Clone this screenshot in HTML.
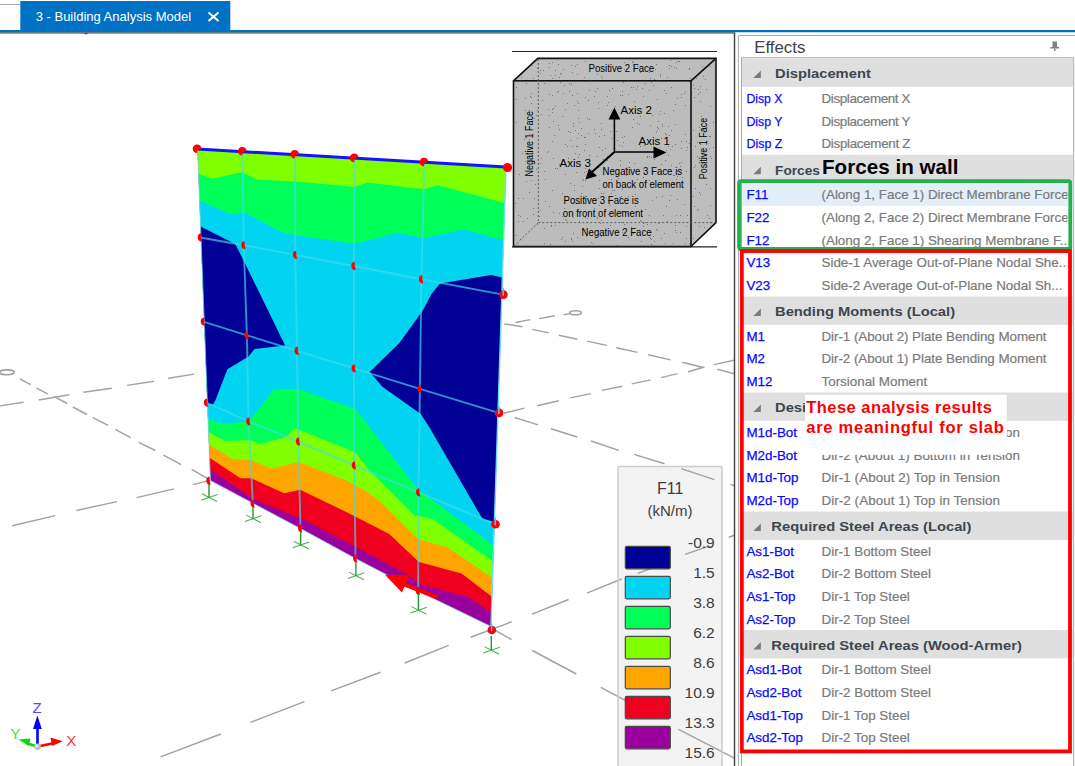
<!DOCTYPE html>
<html><head><meta charset="utf-8"><style>html,body{margin:0;padding:0;background:#fff;overflow:hidden}svg{display:block}</style></head>
<body><svg width="1075" height="766" viewBox="0 0 1075 766">
<g clip-path="url(#vp)">
<path d="M20,378.8L30.6,384.7M36.4,388.2L48.2,394.1M54.1,396.4L67,403.5M72.9,407L87,414.5M92.8,417.6L108.1,425.4M115.3,429.4L130.6,437.6M138.8,442.3L155.3,450.5M163.5,455.2L181.1,464.7M191.7,469.4L208.2,478.8M492,628.5L511.6,639.7M532.3,650.5L576.3,674M600.8,687.3L645,711M678.6,729.3L735,758.5M0,405.9L23.5,402.3M38.8,400L69.3,394.8M83.4,392.2L111.8,388.2M127,385.4L154.1,381.2M168.2,378.3L194.1,374.1M515.6,322.5L530.3,319.6M539.1,318.6L554.8,315.7M563.6,314.7L570,313.6M12.2,525.7L55.2,515.6M76.4,510.5L116.9,501.6M136.5,497.6L174.1,488.9M192.9,484.6L207,481.1M503.9,413.2L524.4,408.1M537.2,405.7L558.7,400.8M570.4,397.9L591,393.6M601.8,390.4L622.3,386.2M631.7,383.9L650.5,379.9M661.1,377.6L677.5,373.6M688.1,371.7L704.5,367M713.9,364.6L735,360M160.5,756.9L220.9,734M250.5,722.4L304.4,701.6M331.2,690.9L380.5,672.3M404.7,663L448.7,645.3M470.7,637.3L511.6,621.8M532,614.1L568.6,599.5M586.9,593.1L621.6,579M637.7,573.4L660,565M685.1,554.4L709.7,545.9M728.6,537.4L735,535M503.9,323.9L522.5,326.8M532.3,329.4L548.9,332.9M558.7,335.2L577.3,339.2M587.1,341.1L606.7,345.4M616.4,347.7L637.6,352.4M648.2,354.8L670.5,359.9M682.2,362.3L703.4,367.5M717.5,369.3L735,373.9M514.6,417.5L538.1,424.9M550.9,428.8L577.3,437M591,441L618.8,450.4M634.1,454.4L664.6,463.8M681.3,468.6L714.4,479.6M730.5,484.4L735,485.8" stroke="#a2a2a2" stroke-width="1.45" fill="none"/>
<ellipse cx="7" cy="372.3" rx="7.2" ry="2.4" fill="none" stroke="#a2a2a2" stroke-width="1.6"/>
<ellipse cx="575.5" cy="312.8" rx="5.8" ry="2" fill="none" stroke="#a2a2a2" stroke-width="1.6"/>
<polygon points="197.5,149.0 506.0,167.0 491.0,626.5 418.5,591.3 355.5,558.5 300.5,528.5 252.5,503.0 210.4,480.5" fill="#99009c"/>
<polygon points="197.5,149.0 506.0,167.0 491.5,612.5 468.7,596.9 419.0,584.0 408.0,574.7 356.0,547.0 300.3,518.0 297.0,517.5 252.7,498.5 250.0,496.8 210.0,469.5" fill="#ee001e"/>
<polygon points="197.5,149.0 506.0,167.0 492.0,596.8 461.5,573.6 418.9,562.0 389.2,533.9 356.1,517.0 340.0,509.0 300.2,489.8 284.0,493.3 251.4,478.3 240.4,478.3 209.5,457.7" fill="#ffa500"/>
<polygon points="197.5,149.0 506.0,167.0 492.6,578.0 447.5,547.2 418.9,539.5 379.0,500.0 373.9,496.9 367.1,491.8 345.0,480.0 298.7,462.1 271.6,468.7 250.5,460.0 233.4,459.4 209.0,444.5" fill="#80ff00"/>
<polygon points="198.5,173.5 212.0,178.8 242.5,172.3 256.8,179.5 295.0,181.4 345.0,185.9 354.6,187.1 367.4,182.4 424.0,189.3 437.8,185.3 504.8,203.0 493.1,561.4 433.3,519.6 418.9,515.7 414.7,515.5 373.9,474.8 368.8,469.7 355.2,452.2 298.3,429.5 293.6,428.8 288.5,435.0 284.5,437.4 260.8,443.8 249.8,440.2 225.1,441.1 208.5,432.0" fill="#00ff58"/>
<polygon points="199.5,200.4 230.0,214.0 244.0,212.2 285.0,233.8 296.0,235.0 354.4,244.0 396.7,232.8 424.0,237.8 464.3,229.6 503.6,240.5 493.6,545.7 417.0,488.3 355.1,408.6 329.2,400.0 298.5,389.2 294.6,388.9 274.1,388.8 273.2,390.0 266.2,400.0 257.1,411.0 248.0,421.6 222.4,423.7 208.0,419.0" fill="#00d4f0"/>
<polygon points="200.5,226.6 235.3,244.0 244.8,263.0 285.1,345.5 254.6,348.9 248.6,356.5 227.4,369.3 215.5,400.0 213.0,404.4 207.4,404.0" fill="#000096"/>
<polygon points="502.4,277.6 491.0,275.1 440.1,283.6 431.6,293.8 423.1,309.9 399.4,343.0 369.7,372.0 382.4,386.7 420.8,414.1 429.9,428.2 482.5,519.0 494.4,521.7" fill="#000096"/>
<polyline points="506.0,167.0 491.0,626.5" fill="none" stroke="#6fdcff" stroke-width="1.4"/>
<polyline points="210.4,480.5 252.5,503.0 300.5,528.5 355.5,558.5 418.5,591.3 491.0,626.5" fill="none" stroke="#7fd0ff" stroke-width="1" opacity="0.8"/>
<line x1="197.5" y1="149" x2="210.4" y2="480.5" stroke="#7fd8ff" stroke-width="1" opacity="0.8"/>
<polyline points="200.2,237.5 243.7,245.2 295.3,254.9 353.8,266.0 421.4,279.3 502.9,294.6" fill="none" stroke="#44daee" stroke-width="1.9" opacity="0.66"/>
<polyline points="203.2,321.7 246.9,335.3 297.0,350.8 354.0,368.4 419.9,388.9 498.6,412.9" fill="none" stroke="#44daee" stroke-width="1.9" opacity="0.66"/>
<polyline points="206.3,402.7 248.6,421.4 298.3,441.5 354.2,465.4 418.5,492.4 495.0,524.2" fill="none" stroke="#44daee" stroke-width="1.9" opacity="0.66"/>
<polyline points="242.7,151.6 243.7,245.2 246.9,335.3 248.6,421.4 252.9,503.7" fill="none" stroke="#44daee" stroke-width="1.9" opacity="0.66"/>
<polyline points="295.1,154.6 295.3,254.9 297.0,350.8 298.3,441.5 300.5,528.3" fill="none" stroke="#44daee" stroke-width="1.9" opacity="0.66"/>
<polyline points="354.6,158.2 353.8,266.0 354.0,368.4 354.2,465.4 355.5,558.4" fill="none" stroke="#44daee" stroke-width="1.9" opacity="0.66"/>
<polyline points="424.4,162.3 421.4,279.3 419.9,388.9 418.5,492.4 418.2,591.0" fill="none" stroke="#44daee" stroke-width="1.9" opacity="0.66"/>
<line x1="197.5" y1="149" x2="506" y2="167" stroke="#1414ff" stroke-width="3"/>
<path d="M197.0,144.39999999999998 A4.3,4.3 0 0 0 197.0,153.0 L197.6,149.7 L201.3,148.39999999999998 A4.3,4.3 0 0 0 197.0,144.39999999999998 Z" fill="#ff0000"/>
<path d="M242.2,146.99999999999997 A4.3,4.3 0 0 0 242.2,155.6 L242.79999999999998,152.29999999999998 L246.5,150.99999999999997 A4.3,4.3 0 0 0 242.2,146.99999999999997 Z" fill="#ff0000"/>
<path d="M294.6,149.99999999999997 A4.3,4.3 0 0 0 294.6,158.6 L295.20000000000005,155.29999999999998 L298.90000000000003,153.99999999999997 A4.3,4.3 0 0 0 294.6,149.99999999999997 Z" fill="#ff0000"/>
<path d="M354.1,153.59999999999997 A4.3,4.3 0 0 0 354.1,162.2 L354.70000000000005,158.89999999999998 L358.40000000000003,157.59999999999997 A4.3,4.3 0 0 0 354.1,153.59999999999997 Z" fill="#ff0000"/>
<path d="M423.9,157.7 A4.3,4.3 0 0 0 423.9,166.3 L424.5,163.0 L428.2,161.7 A4.3,4.3 0 0 0 423.9,157.7 Z" fill="#ff0000"/>
<circle cx="507.5" cy="167.5" r="4.6" fill="#ff0000"/>
<path d="M201.0,233.3 A4.2,4.2 0 0 0 202.0,241.6 C201.39999999999998,239.5 201.1,236.5 201.0,233.3 Z" fill="#ff0000"/>
<path d="M244.5,241.0 A4.2,4.2 0 0 0 245.5,249.29999999999998 C244.89999999999998,247.2 244.6,244.2 244.5,241.0 Z" fill="#ff0000"/>
<path d="M296.1,250.70000000000002 A4.2,4.2 0 0 0 297.1,259.0 C296.5,256.9 296.2,253.9 296.1,250.70000000000002 Z" fill="#ff0000"/>
<path d="M354.6,261.8 A4.2,4.2 0 0 0 355.6,270.1 C355.0,268 354.7,265 354.6,261.8 Z" fill="#ff0000"/>
<path d="M422.2,275.1 A4.2,4.2 0 0 0 423.2,283.40000000000003 C422.59999999999997,281.3 422.29999999999995,278.3 422.2,275.1 Z" fill="#ff0000"/>
<circle cx="503.4" cy="294.6" r="4.3" fill="#ff0000"/>
<line x1="503.2" y1="288.6" x2="503.2" y2="295.1" stroke="#3cc8ff" stroke-width="1.6" stroke-linecap="round"/>
<path d="M204.0,317.5 A4.2,4.2 0 0 0 205.0,325.8 C204.39999999999998,323.7 204.1,320.7 204.0,317.5 Z" fill="#ff0000"/>
<path d="M247.70000000000002,331.1 A4.2,4.2 0 0 0 248.70000000000002,339.40000000000003 C248.1,337.3 247.8,334.3 247.70000000000002,331.1 Z" fill="#ff0000"/>
<path d="M297.8,346.6 A4.2,4.2 0 0 0 298.8,354.90000000000003 C298.2,352.8 297.9,349.8 297.8,346.6 Z" fill="#ff0000"/>
<path d="M354.8,364.2 A4.2,4.2 0 0 0 355.8,372.5 C355.2,370.4 354.9,367.4 354.8,364.2 Z" fill="#ff0000"/>
<path d="M420.7,384.7 A4.2,4.2 0 0 0 421.7,393.0 C421.09999999999997,390.9 420.79999999999995,387.9 420.7,384.7 Z" fill="#ff0000"/>
<circle cx="499.1" cy="412.9" r="4.3" fill="#ff0000"/>
<line x1="498.90000000000003" y1="406.9" x2="498.90000000000003" y2="413.4" stroke="#3cc8ff" stroke-width="1.6" stroke-linecap="round"/>
<path d="M207.10000000000002,398.5 A4.2,4.2 0 0 0 208.10000000000002,406.8 C207.5,404.7 207.20000000000002,401.7 207.10000000000002,398.5 Z" fill="#ff0000"/>
<path d="M249.4,417.2 A4.2,4.2 0 0 0 250.4,425.5 C249.79999999999998,423.4 249.5,420.4 249.4,417.2 Z" fill="#ff0000"/>
<path d="M299.1,437.3 A4.2,4.2 0 0 0 300.1,445.6 C299.5,443.5 299.2,440.5 299.1,437.3 Z" fill="#ff0000"/>
<path d="M355.0,461.2 A4.2,4.2 0 0 0 356.0,469.5 C355.4,467.4 355.09999999999997,464.4 355.0,461.2 Z" fill="#ff0000"/>
<path d="M419.3,488.2 A4.2,4.2 0 0 0 420.3,496.5 C419.7,494.4 419.4,491.4 419.3,488.2 Z" fill="#ff0000"/>
<circle cx="495.5" cy="524.2" r="4.3" fill="#ff0000"/>
<line x1="495.3" y1="518.2" x2="495.3" y2="524.7" stroke="#3cc8ff" stroke-width="1.6" stroke-linecap="round"/>
<path d="M209.60000000000002,476.6 A4.2,4.2 0 0 0 210.60000000000002,484.90000000000003 C210.0,482.8 209.70000000000002,479.8 209.60000000000002,476.6 Z" fill="#ff0000"/>
<path d="M253.70000000000002,499.5 A4.2,4.2 0 0 0 254.70000000000002,507.8 C254.1,505.7 253.8,502.7 253.70000000000002,499.5 Z" fill="#ff0000"/>
<path d="M301.3,524.0999999999999 A4.2,4.2 0 0 0 302.3,532.4 C301.7,530.3 301.4,527.3 301.3,524.0999999999999 Z" fill="#ff0000"/>
<path d="M356.3,554.1999999999999 A4.2,4.2 0 0 0 357.3,562.5 C356.7,560.4 356.4,557.4 356.3,554.1999999999999 Z" fill="#ff0000"/>
<path d="M419.0,586.8 A4.2,4.2 0 0 0 420.0,595.1 C419.4,593 419.09999999999997,590 419.0,586.8 Z" fill="#ff0000"/>
<circle cx="491.8" cy="630" r="4.3" fill="#ff0000"/>
<line x1="491.6" y1="624" x2="491.6" y2="630.5" stroke="#3cc8ff" stroke-width="1.6" stroke-linecap="round"/>
<g stroke="#229a30" fill="none"><line x1="209" y1="484" x2="209" y2="497" stroke-width="1.4"/><line x1="201" y1="500.3" x2="217.5" y2="494.4" stroke-width="1.05" opacity="0.8"/><line x1="202" y1="493.8" x2="217" y2="501.5" stroke-width="1.05" opacity="0.8"/></g>
<g stroke="#229a30" fill="none"><line x1="253" y1="506.7" x2="253" y2="518.3" stroke-width="1.4"/><line x1="245" y1="521.5999999999999" x2="261.5" y2="515.6999999999999" stroke-width="1.05" opacity="0.8"/><line x1="246" y1="515.0999999999999" x2="261" y2="522.8" stroke-width="1.05" opacity="0.8"/></g>
<g stroke="#229a30" fill="none"><line x1="300.7" y1="531.3" x2="300.7" y2="544.5" stroke-width="1.4"/><line x1="292.7" y1="547.8" x2="309.2" y2="541.9" stroke-width="1.05" opacity="0.8"/><line x1="293.7" y1="541.3" x2="308.7" y2="549.0" stroke-width="1.05" opacity="0.8"/></g>
<g stroke="#229a30" fill="none"><line x1="355.9" y1="561.5" x2="355.9" y2="575.3" stroke-width="1.4"/><line x1="347.9" y1="578.5999999999999" x2="364.4" y2="572.6999999999999" stroke-width="1.05" opacity="0.8"/><line x1="348.9" y1="572.0999999999999" x2="363.9" y2="579.8" stroke-width="1.05" opacity="0.8"/></g>
<g stroke="#229a30" fill="none"><line x1="418.4" y1="594" x2="418.4" y2="609.8" stroke-width="1.4"/><line x1="410.4" y1="613.0999999999999" x2="426.9" y2="607.1999999999999" stroke-width="1.05" opacity="0.8"/><line x1="411.4" y1="606.5999999999999" x2="426.4" y2="614.3" stroke-width="1.05" opacity="0.8"/></g>
<g stroke="#229a30" fill="none"><line x1="491.3" y1="636" x2="491.3" y2="649.8" stroke-width="1.4"/><line x1="483.3" y1="653.0999999999999" x2="499.8" y2="647.1999999999999" stroke-width="1.05" opacity="0.8"/><line x1="484.3" y1="646.5999999999999" x2="499.3" y2="654.3" stroke-width="1.05" opacity="0.8"/></g>
<polygon points="385,574.7 409.6,574.7 401.9,592.5" fill="#ff0000"/>
<line x1="401" y1="583" x2="437.6" y2="597.6" stroke="#ff0000" stroke-width="4.2"/>
<g font-family="Liberation Sans" fill="#000">
<line x1="512" y1="51.5" x2="717" y2="51.5" stroke="#222" stroke-width="1"/>
<polygon points="513.5,80.8 537.8,58.4 716,58.4 716,222.6 691,246.5 513.5,246.5" fill="#bdbdbd"/>
<rect x="513.5" y="80.8" width="177.5" height="165.7" fill="#bcbcbc" stroke="#111" stroke-width="1.6"/>
<polyline points="513.5,80.8 537.8,58.4 716,58.4 716,222.6 691,246.5" fill="none" stroke="#111" stroke-width="1.6"/>
<line x1="691" y1="80.8" x2="716" y2="58.4" stroke="#111" stroke-width="1.6"/>
<g stroke="#555" stroke-width="0.9" stroke-dasharray="2,2"><line x1="538.3" y1="59" x2="538.3" y2="222.6"/><line x1="538.3" y1="222.6" x2="716" y2="222.6"/><line x1="538.3" y1="222.6" x2="513.5" y2="246.5"/></g>
<line x1="512" y1="246.8" x2="717" y2="246.8" stroke="#222" stroke-width="1.2"/>
<clipPath id="cubeclip"><polygon points="514.5,81.5 538.5,59.2 715,59.2 715,222.3 690.5,245.7 514.5,245.7"/></clipPath>
<path d="M562,161.5h1M589,172.5h1M640,72.5h1M518,215.5h1M567,103.5h1M713,147.5h1M681,148.5h1M642,88.5h1M641,221.5h1M619,197.5h1M649,72.5h1M666,169.5h1M575,66.5h1M687,147.5h1M658,223.5h1M657,230.5h1M594,208.5h1M603,233.5h1M690,78.5h1M542,100.5h1M707,141.5h1M640,116.5h1M616,131.5h1M585,168.5h1M631,227.5h1M651,232.5h1M685,243.5h1M649,90.5h1M686,238.5h1M695,165.5h1M657,99.5h1M680,166.5h1M572,72.5h1M685,243.5h1M533,208.5h1M597,88.5h1M573,202.5h1M689,68.5h1M637,68.5h1M658,121.5h1M690,241.5h1M616,245.5h1M577,74.5h1M634,66.5h1M554,135.5h1M636,89.5h1M523,221.5h1M577,237.5h1M693,130.5h1M607,156.5h1M643,170.5h1M626,175.5h1M702,154.5h1M601,193.5h1M562,116.5h1M710,156.5h1M624,62.5h1M598,167.5h1M519,174.5h1M641,71.5h1M640,146.5h1M650,125.5h1M656,197.5h1M519,71.5h1M650,238.5h1M565,144.5h1M633,119.5h1M587,118.5h1M588,170.5h1M575,130.5h1M669,65.5h1M628,196.5h1M577,101.5h1M675,104.5h1M552,141.5h1M654,79.5h1M579,122.5h1M681,141.5h1M685,91.5h1M582,180.5h1M691,143.5h1M560,82.5h1M620,95.5h1M676,215.5h1M552,112.5h1M676,179.5h1M675,124.5h1M541,114.5h1M673,110.5h1M584,137.5h1M599,136.5h1M698,89.5h1M516,235.5h1M690,243.5h1M601,236.5h1M700,101.5h1M663,215.5h1M647,156.5h1M573,123.5h1M560,73.5h1M632,113.5h1M676,68.5h1M695,188.5h1M699,226.5h1M694,167.5h1M518,198.5h1M549,115.5h1M647,157.5h1M597,234.5h1M637,123.5h1M565,219.5h1M610,205.5h1M585,97.5h1M621,211.5h1M549,206.5h1M698,209.5h1M679,61.5h1M640,220.5h1M525,110.5h1M568,158.5h1M599,147.5h1M670,60.5h1M526,83.5h1M540,73.5h1M709,218.5h1M532,153.5h1M578,118.5h1M585,180.5h1M632,127.5h1M553,121.5h1M540,163.5h1M657,130.5h1M531,93.5h1M589,172.5h1M671,130.5h1M674,175.5h1M601,129.5h1M614,190.5h1M599,188.5h1M607,105.5h1M622,189.5h1M529,139.5h1M600,223.5h1M701,129.5h1M694,206.5h1M567,146.5h1M540,210.5h1M647,224.5h1M673,183.5h1M661,164.5h1M536,169.5h1M516,87.5h1M669,68.5h1M533,78.5h1M690,93.5h1M520,216.5h1M539,216.5h1M649,215.5h1M705,167.5h1M674,67.5h1M668,155.5h1M657,80.5h1M664,233.5h1M527,120.5h1M627,213.5h1M563,93.5h1M565,174.5h1M665,133.5h1M588,133.5h1M585,137.5h1M532,153.5h1M709,136.5h1M664,90.5h1M652,200.5h1M649,156.5h1M611,179.5h1M694,88.5h1M534,198.5h1M697,156.5h1M603,193.5h1M552,109.5h1M555,168.5h1M578,103.5h1M653,236.5h1M574,190.5h1M597,218.5h1M631,109.5h1M558,64.5h1M610,131.5h1M549,127.5h1M579,203.5h1M544,243.5h1M610,171.5h1M608,214.5h1M679,163.5h1M611,193.5h1M685,134.5h1M661,238.5h1M608,102.5h1M562,193.5h1M649,237.5h1M685,105.5h1M553,108.5h1M552,190.5h1M686,226.5h1M566,220.5h1M577,138.5h1M660,76.5h1M533,214.5h1M573,126.5h1M630,185.5h1M516,122.5h1M602,150.5h1M557,168.5h1M705,132.5h1M623,82.5h1M570,183.5h1M537,224.5h1M696,78.5h1M702,129.5h1M669,200.5h1M574,185.5h1M645,209.5h1M568,200.5h1M706,184.5h1M622,81.5h1M613,125.5h1M658,186.5h1M628,94.5h1M643,177.5h1M551,225.5h1M645,83.5h1M700,86.5h1M581,193.5h1M634,163.5h1M644,145.5h1M577,93.5h1M529,192.5h1M665,160.5h1M662,126.5h1M568,131.5h1M689,68.5h1M615,106.5h1M668,126.5h1M581,135.5h1M623,203.5h1M585,217.5h1M537,110.5h1M535,81.5h1M670,195.5h1M552,95.5h1M598,198.5h1M677,199.5h1M633,87.5h1M594,96.5h1M620,165.5h1M555,106.5h1M671,66.5h1M675,225.5h1M704,131.5h1M625,168.5h1M641,241.5h1M652,115.5h1M686,150.5h1M635,194.5h1M515,203.5h1M647,151.5h1M619,145.5h1M553,158.5h1M522,153.5h1M644,142.5h1M628,237.5h1M693,85.5h1M673,175.5h1M525,127.5h1M561,74.5h1M622,232.5h1M579,221.5h1M653,85.5h1M686,171.5h1M699,192.5h1M662,124.5h1M676,232.5h1M686,141.5h1M666,150.5h1M537,68.5h1M531,97.5h1M547,152.5h1M654,159.5h1M599,180.5h1M576,146.5h1M666,134.5h1M551,226.5h1M658,128.5h1M589,158.5h1M634,101.5h1M516,99.5h1M671,87.5h1M607,96.5h1M557,92.5h1M595,91.5h1M520,80.5h1M548,151.5h1M527,64.5h1M604,135.5h1M655,69.5h1M595,133.5h1M520,239.5h1M559,77.5h1M609,90.5h1M639,124.5h1M540,70.5h1M660,111.5h1M672,146.5h1M701,116.5h1M565,109.5h1M677,176.5h1M584,77.5h1M651,239.5h1M633,61.5h1M521,77.5h1M549,67.5h1M526,181.5h1M694,97.5h1M709,148.5h1M675,230.5h1M702,66.5h1M576,172.5h1M703,76.5h1M573,217.5h1M538,132.5h1M582,186.5h1M700,92.5h1M662,196.5h1M681,162.5h1M699,127.5h1M598,102.5h1M670,149.5h1M569,91.5h1M658,172.5h1M656,132.5h1M612,88.5h1M656,64.5h1M608,200.5h1M650,78.5h1M562,216.5h1M643,223.5h1M689,143.5h1M693,196.5h1M581,128.5h1M529,134.5h1M705,79.5h1M628,80.5h1M531,180.5h1M563,69.5h1M545,179.5h1M632,62.5h1M561,239.5h1M559,164.5h1M599,205.5h1M635,206.5h1M622,95.5h1M550,75.5h1M679,81.5h1M520,239.5h1M555,225.5h1M532,146.5h1M559,213.5h1M637,179.5h1M667,221.5h1M584,172.5h1M604,81.5h1M681,170.5h1M677,98.5h1M622,146.5h1M660,74.5h1M584,150.5h1M529,162.5h1M661,138.5h1M644,172.5h1M558,125.5h1M713,122.5h1M601,76.5h1M558,91.5h1M700,194.5h1M689,243.5h1M637,232.5h1M622,137.5h1M704,227.5h1M704,150.5h1M669,135.5h1M713,230.5h1M573,233.5h1M552,78.5h1M659,114.5h1M618,178.5h1M523,198.5h1M570,140.5h1M584,197.5h1M664,113.5h1M536,115.5h1M597,74.5h1M545,201.5h1M654,241.5h1M710,222.5h1M589,90.5h1M577,146.5h1M620,160.5h1M587,218.5h1M572,146.5h1M691,209.5h1M574,105.5h1M676,62.5h1M541,158.5h1M622,91.5h1M525,98.5h1M668,146.5h1M710,205.5h1M710,66.5h1M552,62.5h1M601,123.5h1M525,161.5h1M534,118.5h1M564,208.5h1M598,108.5h1M524,139.5h1M640,185.5h1M697,210.5h1M564,85.5h1M666,206.5h1M616,214.5h1M625,112.5h1M549,63.5h1M643,226.5h1M695,146.5h1M647,232.5h1M677,171.5h1M597,156.5h1M549,94.5h1M651,244.5h1M624,136.5h1M585,144.5h1M675,144.5h1M706,89.5h1M578,157.5h1M597,217.5h1M680,232.5h1M637,66.5h1M629,162.5h1M612,112.5h1M656,229.5h1M535,184.5h1M589,155.5h1M693,238.5h1M643,96.5h1M698,94.5h1M591,213.5h1M578,110.5h1M704,235.5h1M578,133.5h1M571,84.5h1M565,241.5h1M531,103.5h1M555,75.5h1M620,197.5h1M682,177.5h1M678,61.5h1M571,238.5h1M529,110.5h1M611,110.5h1M624,69.5h1M562,237.5h1M544,228.5h1M550,244.5h1M649,180.5h1M543,70.5h1M666,93.5h1M553,212.5h1M689,69.5h1M706,159.5h1M591,80.5h1M593,243.5h1M571,84.5h1M544,83.5h1M585,229.5h1M530,96.5h1M702,244.5h1M710,106.5h1M586,236.5h1M612,190.5h1M577,64.5h1M584,198.5h1M671,165.5h1M607,160.5h1M603,159.5h1M681,97.5h1M633,233.5h1M684,93.5h1M707,215.5h1M548,109.5h1M555,70.5h1M710,136.5h1M689,81.5h1M518,221.5h1M673,243.5h1M651,157.5h1M667,77.5h1M623,142.5h1M544,171.5h1M579,154.5h1M589,119.5h1M586,171.5h1M710,233.5h1M687,215.5h1M572,241.5h1M569,83.5h1M615,195.5h1M583,179.5h1M571,239.5h1M605,148.5h1M621,222.5h1M711,158.5h1M603,174.5h1M529,139.5h1M684,204.5h1M527,218.5h1M591,242.5h1M588,100.5h1M624,224.5h1M601,220.5h1M657,127.5h1M575,153.5h1M594,129.5h1M645,222.5h1M631,87.5h1M559,129.5h1M637,86.5h1M531,119.5h1M571,65.5h1M622,230.5h1M621,196.5h1M680,215.5h1M697,142.5h1M651,82.5h1M690,130.5h1M610,225.5h1M572,95.5h1M679,171.5h1M532,65.5h1M585,61.5h1M681,94.5h1M570,132.5h1M617,140.5h1M640,182.5h1M602,78.5h1M710,188.5h1M532,142.5h1M665,243.5h1M528,62.5h1M611,138.5h1" stroke="#3a3a3a" stroke-width="1" opacity="0.55" clip-path="url(#cubeclip)"/>
<line x1="614.4" y1="119" x2="614.4" y2="152" stroke="#000" stroke-width="1.5"/><polygon points="614.4,107.5 608.5,119.5 620.3,119.5"/>
<line x1="614.4" y1="152" x2="654" y2="152" stroke="#000" stroke-width="1.5"/><polygon points="666.5,152.5 653.5,146.5 653.5,158.5"/>
<line x1="614.4" y1="152" x2="592" y2="172" stroke="#000" stroke-width="2"/><polygon points="585.4,179.4 589,168.5 597,176"/>
<g font-size="10.7px">
<text transform="translate(588.5,72.4) scale(0.9,1)">Positive 2 Face</text>
<text x="620.5" y="113.5" font-size="11.5px">Axis 2</text>
<text x="638.5" y="144.5" font-size="11.5px">Axis 1</text>
<text x="559.5" y="166.7" font-size="11.5px">Axis 3</text>
<text transform="translate(602.5,174.8) scale(0.9,1)">Negative 3 Face is</text>
<text transform="translate(602.5,187.5) scale(0.9,1)">on back of element</text>
<text transform="translate(563.5,204) scale(0.9,1)">Positive 3 Face is</text>
<text transform="translate(562.8,216.8) scale(0.9,1)">on front of element</text>
<text transform="translate(581.6,236.3) scale(0.9,1)">Negative 2 Face</text>
<text transform="translate(532.5,176.4) rotate(-90) scale(0.84,1)">Negative 1 Face</text>
<text transform="translate(706.5,179.2) rotate(-90) scale(0.84,1)">Positive 1 Face</text>
</g></g>
<rect x="618" y="466.5" width="104" height="310" fill="#f2f2f2" fill-opacity="0.9" stroke="#cdcdcd" stroke-width="1.5" rx="1"/>
<clipPath id="lg"><rect x="618.8" y="467.3" width="102.4" height="300"/></clipPath>
<g clip-path="url(#lg)">
<path d="M600.8,687.3L645,711M678.6,729.3L735,758.5M586.9,593.1L621.6,579M637.7,573.4L660,565M685.1,554.4L709.7,545.9M634.1,454.4L664.6,463.8M681.3,468.6L714.4,479.6" stroke="#a2a2a2" stroke-width="1.45" fill="none"/>
</g>
<g font-family="Liberation Sans" fill="#3c3c3c">
<text x="670.3" y="493.7" font-size="16px" text-anchor="middle">F11</text>
<text x="670" y="515.5" font-size="15px" text-anchor="middle">(kN/m)</text>
<rect x="625.3" y="546.3" width="45" height="22.5" rx="1.5" fill="#000096" stroke="#4a4a4a" stroke-width="1.2"/>
<rect x="625.3" y="576.3" width="45" height="22.5" rx="1.5" fill="#00d4f0" stroke="#4a4a4a" stroke-width="1.2"/>
<rect x="625.3" y="606.3" width="45" height="22.5" rx="1.5" fill="#00ff58" stroke="#4a4a4a" stroke-width="1.2"/>
<rect x="625.3" y="636.3" width="45" height="22.5" rx="1.5" fill="#80ff00" stroke="#4a4a4a" stroke-width="1.2"/>
<rect x="625.3" y="666.3" width="45" height="22.5" rx="1.5" fill="#ffa500" stroke="#4a4a4a" stroke-width="1.2"/>
<rect x="625.3" y="696.3" width="45" height="22.5" rx="1.5" fill="#ee001e" stroke="#4a4a4a" stroke-width="1.2"/>
<rect x="625.3" y="726.3" width="45" height="22.5" rx="1.5" fill="#99009c" stroke="#4a4a4a" stroke-width="1.2"/>
<text x="714.7" y="547.7" font-size="15.5px" text-anchor="end">-0.9</text>
<text x="714.7" y="577.7" font-size="15.5px" text-anchor="end">1.5</text>
<text x="714.7" y="607.7" font-size="15.5px" text-anchor="end">3.8</text>
<text x="714.7" y="637.7" font-size="15.5px" text-anchor="end">6.2</text>
<text x="714.7" y="667.7" font-size="15.5px" text-anchor="end">8.6</text>
<text x="714.7" y="697.7" font-size="15.5px" text-anchor="end">10.9</text>
<text x="714.7" y="727.7" font-size="15.5px" text-anchor="end">13.3</text>
<text x="714.7" y="757.7" font-size="15.5px" text-anchor="end">15.6</text>
</g>
<line x1="37.5" y1="746" x2="37.5" y2="728" stroke="#0000ff" stroke-width="2.6"/><polygon points="37.4,715.4 33,729 41.8,729" fill="#0000ff"/>
<line x1="38" y1="746.5" x2="52" y2="743.5" stroke="#ff0000" stroke-width="2.4"/><polygon points="62.8,741.2 50.5,737.5 52,746" fill="#ff0000"/>
<line x1="37" y1="746.5" x2="26" y2="743" stroke="#00dd00" stroke-width="2.4"/><polygon points="18.5,739.5 30.3,738.5 29,746" fill="#00dd00"/>
<circle cx="37.6" cy="746.8" r="3.3" fill="#bbb"/><circle cx="36.8" cy="746" r="1.4" fill="#eee"/>
<g font-family="Liberation Sans" font-size="15px"><text x="32.6" y="712.6" fill="#4a4aff">Z</text><text x="66.3" y="746.3" fill="#ff3333">X</text><text x="10.6" y="738.5" fill="#44dd44">Y</text></g>
</g>
<rect x="0" y="0" width="1075" height="30" fill="#fff"/>
<line x1="0" y1="4.5" x2="20.5" y2="4.5" stroke="#a8a8a8" stroke-width="1"/>
<rect x="20.3" y="1" width="210" height="31" fill="#0072c6"/>
<rect x="0" y="30" width="1075" height="2.5" fill="#0072c6"/>
<text x="35.7" y="20.6" font-family="Liberation Sans" font-size="13px" fill="#fff">3 - Building Analysis Model</text>
<g stroke="#fff" stroke-width="2"><line x1="208.5" y1="12.5" x2="218.5" y2="21"/><line x1="218.5" y1="12.5" x2="208.5" y2="21"/></g>
<ellipse cx="86" cy="33.6" rx="2" ry="0.8" fill="#b04848"/>
<line x1="0" y1="33" x2="735" y2="33" stroke="#3c3c3c" stroke-width="1"/>
<line x1="734.6" y1="33" x2="734.6" y2="766" stroke="#3c3c3c" stroke-width="1.6"/>
<rect x="735.5" y="32.5" width="340" height="734" fill="#fff"/>
<line x1="738.4" y1="35.5" x2="1075" y2="35.5" stroke="#a8a8a8" stroke-width="1"/>
<line x1="738.4" y1="35.5" x2="738.4" y2="766" stroke="#a8a8a8" stroke-width="1"/>
<text x="754.3" y="52.5" font-family="Liberation Sans" font-size="16.8px" fill="#3f3f3f">Effects</text>
<g fill="#808080"><rect x="1052.5" y="41.5" width="4.5" height="6"/><rect x="1050.5" y="47" width="8.5" height="1.5"/><rect x="1054" y="48.5" width="1.5" height="2.5"/></g>
<rect x="741.5" y="57.8" width="332.2" height="710" fill="#fff" stroke="#a8a8a8" stroke-width="1"/>
<defs><clipPath id="desc"><rect x="742" y="58" width="325.5" height="710"/></clipPath><clipPath id="vp"><rect x="0" y="33" width="734" height="733"/></clipPath></defs>
<g font-family="Liberation Sans">
<rect x="742" y="58.5" width="331.2" height="28.4" fill="#dfdfdf"/>
<polygon points="753.3,78.0 760.8,78.0 760.8,70.5" fill="#7a7a7a"/>
<text transform="translate(775,78.2) scale(1.125,1)" font-size="13.1px" font-weight="bold" fill="#3c4650">Displacement</text>
<text x="746.4" y="102.9" font-size="13.4px" fill="#0a0aff" stroke="#0a0aff" stroke-width="0.25" textLength="36" lengthAdjust="spacingAndGlyphs">Disp X</text>
<text x="821.5" y="102.9" font-size="13.4px" fill="#7a7a7a" stroke="#7a7a7a" stroke-width="0.2" clip-path="url(#desc)" textLength="89" lengthAdjust="spacing">Displacement X</text>
<text x="746.4" y="125.5" font-size="13.4px" fill="#0a0aff" stroke="#0a0aff" stroke-width="0.25" textLength="36" lengthAdjust="spacingAndGlyphs">Disp Y</text>
<text x="821.5" y="125.5" font-size="13.4px" fill="#7a7a7a" stroke="#7a7a7a" stroke-width="0.2" clip-path="url(#desc)" textLength="89" lengthAdjust="spacing">Displacement Y</text>
<text x="746.4" y="148.2" font-size="13.4px" fill="#0a0aff" stroke="#0a0aff" stroke-width="0.25" textLength="36" lengthAdjust="spacingAndGlyphs">Disp Z</text>
<text x="821.5" y="148.2" font-size="13.4px" fill="#7a7a7a" stroke="#7a7a7a" stroke-width="0.2" clip-path="url(#desc)" textLength="89" lengthAdjust="spacing">Displacement Z</text>
<rect x="742" y="154.8" width="331.2" height="28.4" fill="#dfdfdf"/>
<polygon points="753.3,174.3 760.8,174.3 760.8,166.8" fill="#7a7a7a"/>
<text transform="translate(775,174.5) scale(1.125,1)" font-size="13.1px" font-weight="bold" fill="#3c4650" textLength="40" lengthAdjust="spacingAndGlyphs">Forces</text>
<rect x="742" y="183.2" width="331.2" height="22.7" fill="#e3eef9"/>
<text x="746.4" y="199.2" font-size="13.4px" fill="#0a0aff" stroke="#0a0aff" stroke-width="0.25">F11</text>
<text x="821.5" y="199.2" font-size="13.4px" fill="#7a7a7a" stroke="#7a7a7a" stroke-width="0.2" clip-path="url(#desc)">(Along 1, Face 1) Direct Membrane Force</text>
<text x="746.4" y="221.9" font-size="13.4px" fill="#0a0aff" stroke="#0a0aff" stroke-width="0.25">F22</text>
<text x="821.5" y="221.9" font-size="13.4px" fill="#7a7a7a" stroke="#7a7a7a" stroke-width="0.2" clip-path="url(#desc)">(Along 2, Face 2) Direct Membrane Force</text>
<text x="746.4" y="244.5" font-size="13.4px" fill="#0a0aff" stroke="#0a0aff" stroke-width="0.25">F12</text>
<text x="821.5" y="244.5" font-size="13.4px" fill="#7a7a7a" stroke="#7a7a7a" stroke-width="0.2" clip-path="url(#desc)">(Along 2, Face 1) Shearing Membrane F...</text>
<text x="746.4" y="267.2" font-size="13.4px" fill="#0a0aff" stroke="#0a0aff" stroke-width="0.25">V13</text>
<text x="821.5" y="267.2" font-size="13.4px" fill="#7a7a7a" stroke="#7a7a7a" stroke-width="0.2" clip-path="url(#desc)">Side-1 Average Out-of-Plane Nodal She...</text>
<text x="746.4" y="289.8" font-size="13.4px" fill="#0a0aff" stroke="#0a0aff" stroke-width="0.25">V23</text>
<text x="821.5" y="289.8" font-size="13.4px" fill="#7a7a7a" stroke="#7a7a7a" stroke-width="0.2" clip-path="url(#desc)">Side-2  Average Out-of-Plane Nodal Sh...</text>
<rect x="742" y="296.5" width="331.2" height="28.4" fill="#dfdfdf"/>
<polygon points="753.3,316.0 760.8,316.0 760.8,308.5" fill="#7a7a7a"/>
<text transform="translate(775,316.2) scale(1.125,1)" font-size="13.1px" font-weight="bold" fill="#3c4650">Bending Moments (Local)</text>
<text x="746.4" y="340.9" font-size="13.4px" fill="#0a0aff" stroke="#0a0aff" stroke-width="0.25">M1</text>
<text x="821.5" y="340.9" font-size="13.4px" fill="#7a7a7a" stroke="#7a7a7a" stroke-width="0.2" clip-path="url(#desc)" textLength="225" lengthAdjust="spacing">Dir-1 (About 2) Plate Bending Moment</text>
<text x="746.4" y="363.4" font-size="13.4px" fill="#0a0aff" stroke="#0a0aff" stroke-width="0.25">M2</text>
<text x="821.5" y="363.4" font-size="13.4px" fill="#7a7a7a" stroke="#7a7a7a" stroke-width="0.2" clip-path="url(#desc)" textLength="225" lengthAdjust="spacing">Dir-2 (About 1) Plate Bending Moment</text>
<text x="746.4" y="386.0" font-size="13.4px" fill="#0a0aff" stroke="#0a0aff" stroke-width="0.25">M12</text>
<text x="821.5" y="386.0" font-size="13.4px" fill="#7a7a7a" stroke="#7a7a7a" stroke-width="0.2" clip-path="url(#desc)">Torsional Moment</text>
<rect x="742" y="392.5" width="331.2" height="28.4" fill="#dfdfdf"/>
<polygon points="753.3,412.0 760.8,412.0 760.8,404.5" fill="#7a7a7a"/>
<text transform="translate(775,412.2) scale(1.125,1)" font-size="13.1px" font-weight="bold" fill="#3c4650">Design Moments (Local)</text>
<text x="746.4" y="436.9" font-size="13.4px" fill="#0a0aff" stroke="#0a0aff" stroke-width="0.25">M1d-Bot</text>
<text x="821.5" y="436.9" font-size="13.4px" fill="#7a7a7a" stroke="#7a7a7a" stroke-width="0.2" clip-path="url(#desc)" textLength="198.5" lengthAdjust="spacing">Dir-1 (About 2) Bottom in Tension</text>
<text x="746.4" y="459.5" font-size="13.4px" fill="#0a0aff" stroke="#0a0aff" stroke-width="0.25">M2d-Bot</text>
<text x="821.5" y="459.5" font-size="13.4px" fill="#7a7a7a" stroke="#7a7a7a" stroke-width="0.2" clip-path="url(#desc)" textLength="198.5" lengthAdjust="spacing">Dir-2 (About 1) Bottom in Tension</text>
<text x="746.4" y="482.2" font-size="13.4px" fill="#0a0aff" stroke="#0a0aff" stroke-width="0.25">M1d-Top</text>
<text x="821.5" y="482.2" font-size="13.4px" fill="#7a7a7a" stroke="#7a7a7a" stroke-width="0.2" clip-path="url(#desc)" textLength="178.5" lengthAdjust="spacing">Dir-1 (About 2) Top in Tension</text>
<text x="746.4" y="504.9" font-size="13.4px" fill="#0a0aff" stroke="#0a0aff" stroke-width="0.25">M2d-Top</text>
<text x="821.5" y="504.9" font-size="13.4px" fill="#7a7a7a" stroke="#7a7a7a" stroke-width="0.2" clip-path="url(#desc)" textLength="178.5" lengthAdjust="spacing">Dir-2 (About 1) Top in Tension</text>
<rect x="742" y="511.5" width="331.2" height="28.4" fill="#dfdfdf"/>
<polygon points="753.3,531.0 760.8,531.0 760.8,523.5" fill="#7a7a7a"/>
<text transform="translate(771.3,531.2) scale(1.125,1)" font-size="13.1px" font-weight="bold" fill="#3c4650">Required Steel Areas (Local)</text>
<text x="746.4" y="555.9" font-size="13.4px" fill="#0a0aff" stroke="#0a0aff" stroke-width="0.25">As1-Bot</text>
<text x="821.5" y="555.9" font-size="13.4px" fill="#7a7a7a" stroke="#7a7a7a" stroke-width="0.2" clip-path="url(#desc)">Dir-1 Bottom Steel</text>
<text x="746.4" y="578.4" font-size="13.4px" fill="#0a0aff" stroke="#0a0aff" stroke-width="0.25">As2-Bot</text>
<text x="821.5" y="578.4" font-size="13.4px" fill="#7a7a7a" stroke="#7a7a7a" stroke-width="0.2" clip-path="url(#desc)">Dir-2 Bottom Steel</text>
<text x="746.4" y="601.0" font-size="13.4px" fill="#0a0aff" stroke="#0a0aff" stroke-width="0.25">As1-Top</text>
<text x="821.5" y="601.0" font-size="13.4px" fill="#7a7a7a" stroke="#7a7a7a" stroke-width="0.2" clip-path="url(#desc)">Dir-1 Top Steel</text>
<text x="746.4" y="623.5" font-size="13.4px" fill="#0a0aff" stroke="#0a0aff" stroke-width="0.25">As2-Top</text>
<text x="821.5" y="623.5" font-size="13.4px" fill="#7a7a7a" stroke="#7a7a7a" stroke-width="0.2" clip-path="url(#desc)">Dir-2 Top Steel</text>
<rect x="742" y="630" width="331.2" height="28.4" fill="#dfdfdf"/>
<polygon points="753.3,649.5 760.8,649.5 760.8,642" fill="#7a7a7a"/>
<text transform="translate(771.3,649.7) scale(1.125,1)" font-size="13.1px" font-weight="bold" fill="#3c4650">Required Steel Areas (Wood-Armer)</text>
<text x="746.4" y="674.4" font-size="13.4px" fill="#0a0aff" stroke="#0a0aff" stroke-width="0.25">Asd1-Bot</text>
<text x="821.5" y="674.4" font-size="13.4px" fill="#7a7a7a" stroke="#7a7a7a" stroke-width="0.2" clip-path="url(#desc)">Dir-1 Bottom Steel</text>
<text x="746.4" y="696.9" font-size="13.4px" fill="#0a0aff" stroke="#0a0aff" stroke-width="0.25">Asd2-Bot</text>
<text x="821.5" y="696.9" font-size="13.4px" fill="#7a7a7a" stroke="#7a7a7a" stroke-width="0.2" clip-path="url(#desc)">Dir-2 Bottom Steel</text>
<text x="746.4" y="719.5" font-size="13.4px" fill="#0a0aff" stroke="#0a0aff" stroke-width="0.25">Asd1-Top</text>
<text x="821.5" y="719.5" font-size="13.4px" fill="#7a7a7a" stroke="#7a7a7a" stroke-width="0.2" clip-path="url(#desc)">Dir-1 Top Steel</text>
<text x="746.4" y="742.0" font-size="13.4px" fill="#0a0aff" stroke="#0a0aff" stroke-width="0.25">Asd2-Top</text>
<text x="821.5" y="742.0" font-size="13.4px" fill="#7a7a7a" stroke="#7a7a7a" stroke-width="0.2" clip-path="url(#desc)">Dir-2 Top Steel</text>
</g>
<rect x="739.05" y="181.15" width="331.25" height="67.8" rx="2" fill="none" stroke="#22b14c" stroke-width="3.8"/>
<rect x="741.85" y="251.05" width="328.15" height="500.35" fill="none" stroke="#ff0000" stroke-width="3.8"/>
<text x="822" y="173.8" font-family="Liberation Sans" font-size="20.6px" font-weight="bold" fill="#000" textLength="136.5" lengthAdjust="spacing">Forces in wall</text>
<rect x="805" y="394.8" width="201.8" height="60" fill="#fff"/>
<g font-family="Liberation Sans" font-size="16.5px" font-weight="bold" fill="#ff0000" letter-spacing="0.45"><text x="806.3" y="412.7" textLength="186" lengthAdjust="spacing">These analysis results</text><text x="806.3" y="433.4" textLength="198" lengthAdjust="spacing">are meaningful for slab</text></g>
</svg></body></html>
